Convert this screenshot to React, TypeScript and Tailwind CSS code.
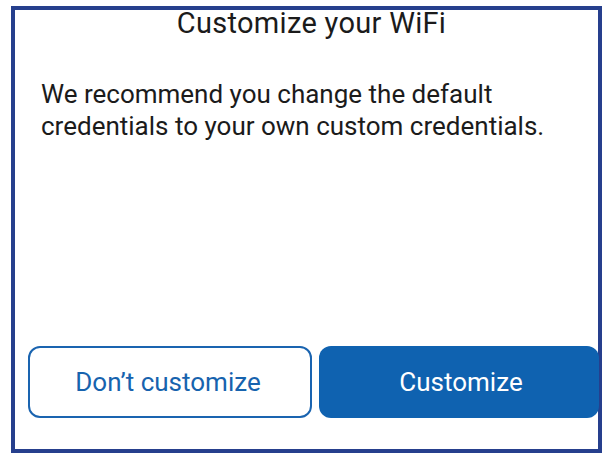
export default function App() {
  return (
    <div className="w-[611px] h-[462px] bg-white pt-[6px] pl-[11px]" style={{ fontFamily: 'Roboto, "Noto Sans", sans-serif' }}>
      <div className="w-[591px] h-[447px] border-4 border-[#263f8d] flex flex-col">
        <h1 className="text-center text-[29px] leading-[30px] text-[#1b1b1b] -mt-[2px] pl-[10px] tracking-[0.3px]">Customize your WiFi</h1>
        <p className="mt-[40px] ml-[26px] text-[26px] leading-[32px] text-[#1b1b1b]">
          We recommend you change the default
          <br />
          credentials to your own custom credentials.
        </p>
        <div className="flex-1" />
        <div className="flex gap-[7px] pl-[13px] mb-[31px] -mr-[1px]">
          <button className="w-[284px] h-[72px] rounded-[12px] border-2 border-[#1a64b0] text-[#1763ae] text-[26px] pr-[4px]">
            Don’t customize
          </button>
          <button className="flex-1 h-[72px] rounded-[12px] bg-[#0f62b0] text-white text-[26px] pl-[4px]">
            Customize
          </button>
        </div>
      </div>
    </div>
  );
}
